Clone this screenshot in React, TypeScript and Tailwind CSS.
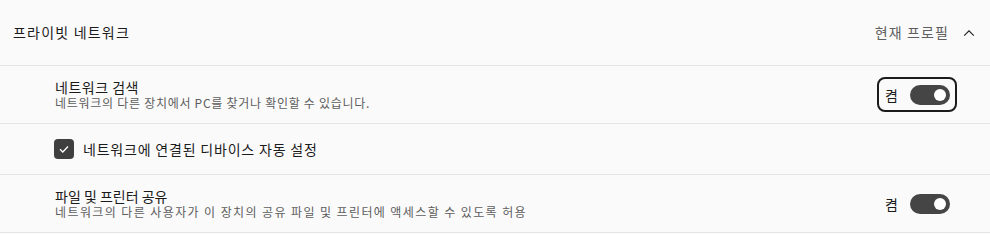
import React from "react";

const FONT = { fontFamily: '"Noto Sans CJK KR", "Noto Sans", sans-serif' };

function Toggle({ focused }: { focused?: boolean }) {
  return (
    <div
      className={
        "flex items-center h-[35px] pl-[6px] pr-[5px] rounded-[8px] border-2 " +
        (focused ? "border-[#1b1b1b]" : "border-transparent")
      }
    >
      <span className="text-[14px] text-[#1b1b1b] leading-none w-[25px]">켬</span>
      <div className="w-[40px] h-[20px] rounded-full bg-[#454545] flex items-center justify-end pr-[4px]">
        <div className="w-[12px] h-[12px] rounded-full bg-white" />
      </div>
    </div>
  );
}

function SettingRow({
  title,
  desc,
  focused,
  titleCls,
  descCls,
}: {
  title: string;
  desc: string;
  focused?: boolean;
  titleCls: string;
  descCls: string;
}) {
  return (
    <div className="h-[58px] flex items-center justify-between pl-[55px] pr-[33px] border-b border-[#e5e5e5]">
      <div className="flex flex-col pt-[1px]">
        <span className={"text-[14px] leading-[16px] text-[#1b1b1b] " + titleCls}>{title}</span>
        <span className={"text-[12px] leading-[16px] text-[#5d5d5d] " + descCls}>{desc}</span>
      </div>
      <Toggle focused={focused} />
    </div>
  );
}

export default function App() {
  return (
    <div className="w-[990px] h-[234px] bg-[#fafafa] overflow-hidden" style={FONT}>
      <div className="h-[66px] flex items-center justify-between pl-[13px] pr-[14px] border-b border-[#e5e5e5]">
        <span className="text-[14px] tracking-[1.2px] text-[#1b1b1b]">프라이빗 네트워크</span>
        <div className="flex items-center gap-[13px]">
          <span className="text-[14px] tracking-[1.1px] text-[#5f5f5f]">현재 프로필</span>
          <svg width="14" height="14" viewBox="0 0 16 16" fill="none">
            <path d="M2.5 11 L8 5.5 L13.5 11" stroke="#1b1b1b" strokeWidth="1.2" />
          </svg>
        </div>
      </div>
      <SettingRow
        title="네트워크 검색"
        desc="네트워크의 다른 장치에서 PC를 찾거나 확인할 수 있습니다."
        focused
        titleCls="tracking-[0.5px]"
        descCls="tracking-[0.72px]"
      />
      <div className="h-[51px] flex items-center pl-[54px] border-b border-[#e5e5e5]">
        <div className="w-[20px] h-[20px] rounded-[4px] bg-[#3f3f3f] flex items-center justify-center">
          <svg width="12" height="12" viewBox="0 0 12 12" fill="none">
            <path d="M2 6.3 L4.8 9 L10 3.5" stroke="white" strokeWidth="1.3" />
          </svg>
        </div>
        <span className="ml-[9px] text-[14px] tracking-[0.8px] text-[#1b1b1b]">네트워크에 연결된 디바이스 자동 설정</span>
      </div>
      <SettingRow
        title="파일 및 프린터 공유"
        desc="네트워크의 다른 사용자가 이 장치의 공유 파일 및 프린터에 액세스할 수 있도록 허용"
        titleCls="tracking-[0px]"
        descCls="tracking-[1.4px]"
      />
    </div>
  );
}
